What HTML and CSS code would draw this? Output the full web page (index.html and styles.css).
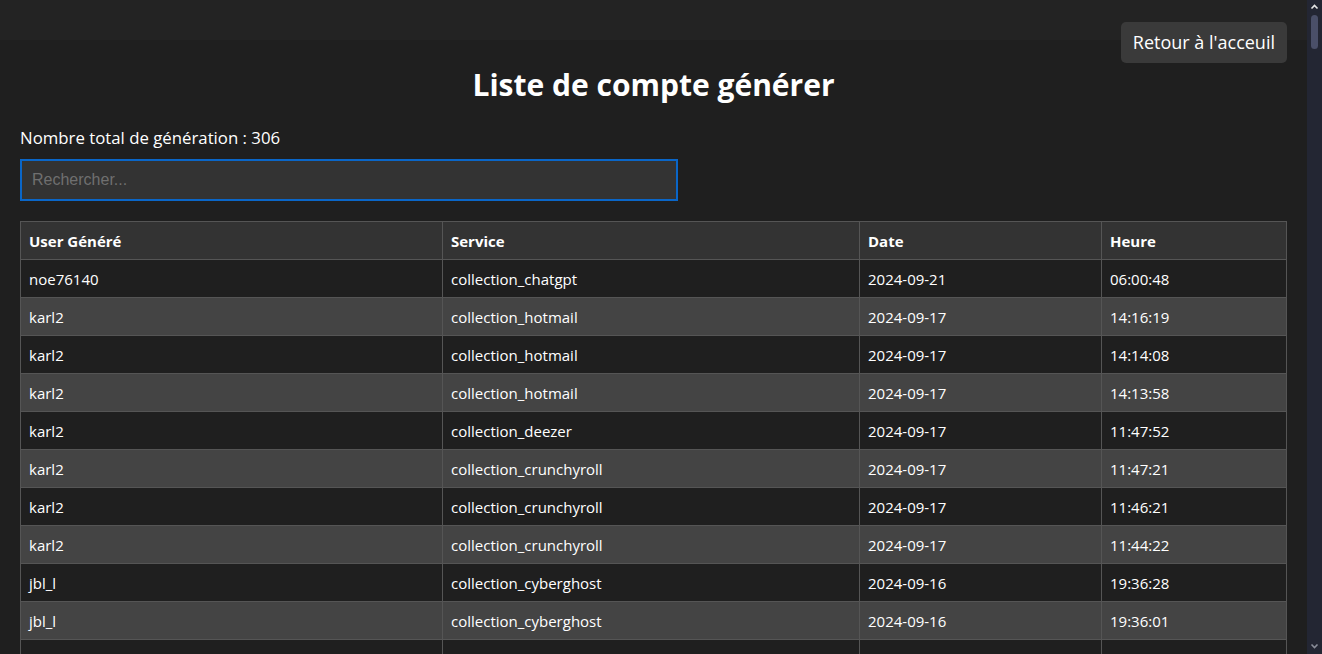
FILE: index.html
```html
<!DOCTYPE html>
<html lang="fr">
<head>
<meta charset="utf-8">
<title>Liste de compte générer</title>
<link rel="stylesheet" href="styles.css">
</head>
<body>
<header class="topbar"></header>
<main class="page">
  <div class="actions">
    <a class="home-btn" href="#">Retour à l'acceuil</a>
  </div>
  <h1 class="title">Liste de compte générer</h1>
  <p class="total">Nombre total de génération : 306</p>
  <input class="search" type="text" placeholder="Rechercher...">
  <table class="list">
    <thead>
      <tr><th class="c1">User Généré</th><th class="c2">Service</th><th class="c3">Date</th><th class="c4">Heure</th></tr>
    </thead>
    <tbody>
      <tr><td>noe76140</td><td>collection_chatgpt</td><td>2024-09-21</td><td>06:00:48</td></tr>
      <tr><td>karl2</td><td>collection_hotmail</td><td>2024-09-17</td><td>14:16:19</td></tr>
      <tr><td>karl2</td><td>collection_hotmail</td><td>2024-09-17</td><td>14:14:08</td></tr>
      <tr><td>karl2</td><td>collection_hotmail</td><td>2024-09-17</td><td>14:13:58</td></tr>
      <tr><td>karl2</td><td>collection_deezer</td><td>2024-09-17</td><td>11:47:52</td></tr>
      <tr><td>karl2</td><td>collection_crunchyroll</td><td>2024-09-17</td><td>11:47:21</td></tr>
      <tr><td>karl2</td><td>collection_crunchyroll</td><td>2024-09-17</td><td>11:46:21</td></tr>
      <tr><td>karl2</td><td>collection_crunchyroll</td><td>2024-09-17</td><td>11:44:22</td></tr>
      <tr><td>jbl_l</td><td>collection_cyberghost</td><td>2024-09-16</td><td>19:36:28</td></tr>
      <tr><td>jbl_l</td><td>collection_cyberghost</td><td>2024-09-16</td><td>19:36:01</td></tr>
      <tr><td>jbl_l</td><td>collection_cyberghost</td><td>2024-09-16</td><td>19:35:44</td></tr>
      <tr><td>jbl_l</td><td>collection_cyberghost</td><td>2024-09-16</td><td>19:35:12</td></tr>
      <tr><td>jbl_l</td><td>collection_hotmail</td><td>2024-09-16</td><td>19:30:05</td></tr>
      <tr><td>jbl_l</td><td>collection_hotmail</td><td>2024-09-16</td><td>19:29:47</td></tr>
    </tbody>
  </table>
</main>
<aside class="scrollbar" aria-hidden="true">
  <svg class="arrow up" width="15" height="14" viewBox="0 0 15 14"><path d="M4.5 8.5 L7.5 5.5 L10.5 8.5" fill="none" stroke="#e6e6e6" stroke-width="1.6"/></svg>
  <div class="thumb"></div>
  <svg class="arrow down" width="15" height="14" viewBox="0 0 15 14"><path d="M4.5 5.5 L7.5 8.5 L10.5 5.5" fill="none" stroke="#8a8d99" stroke-width="1.6"/></svg>
</aside>
</body>
</html>
```
FILE: styles.css
```css
html {
  background: #1f1f1f;
}
body {
  margin: 0;
  padding-right: 15px;
  background: #1f1f1f;
  color: #ffffff;
  font-family: "Open Sans", "Noto Sans", "Liberation Sans", sans-serif;
}
.topbar {
  height: 40px;
  background: #232323;
}
.page {
  margin-top: -40px;
  padding: 22px 20px 20px;
}
.actions {
  display: flex;
  justify-content: flex-end;
}
.home-btn {
  display: block;
  background: #3a3a3a;
  color: #ffffff;
  text-decoration: none;
  font-size: 18px;
  line-height: 41px;
  padding: 0 12px;
  border-radius: 5px;
}
.title {
  margin: 2px 0 0;
  text-align: center;
  font-size: 30px;
  font-weight: 700;
  line-height: 40px;
}
.total {
  margin: 21px 0 0;
  font-size: 16.8px;
  line-height: 24px;
}
.search {
  display: block;
  box-sizing: border-box;
  width: 658px;
  height: 42px;
  margin-top: 9px;
  padding: 0 10px;
  background: #333333;
  border: 2px solid #0a66c8;
  color: #ffffff;
  font-family: "Liberation Sans", Arial, sans-serif;
  font-size: 16px;
  outline: none;
}
.search::placeholder {
  color: #6f6f6f;
}
.list {
  width: 100%;
  margin-top: 20px;
  border-collapse: collapse;
  table-layout: fixed;
  font-size: 15px;
}
.list th,
.list td {
  border: 1px solid #555555;
  padding: 0 8px;
  height: 38px;
  text-align: left;
  box-sizing: border-box;
}
.list th {
  background: #333333;
  font-weight: 700;
  height: 38px;
}
.c1 { width: 422px; }
.c2 { width: 417px; }
.c3 { width: 242px; }
.list tbody tr:nth-child(odd) td {
  background: #1f1f1f;
}
.list tbody tr:nth-child(even) td {
  background: #444444;
}
.scrollbar {
  position: fixed;
  top: 0;
  right: 0;
  width: 15px;
  height: 100vh;
  background: #232633;
  display: flex;
  flex-direction: column;
  align-items: center;
}
.arrow {
  display: block;
  flex: none;
}
.thumb {
  width: 7px;
  height: 34px;
  margin-top: 1px;
  border-radius: 4px;
  background: #4a4f68;
}
.arrow.down {
  margin-top: auto;
  margin-bottom: 1px;
}
```
